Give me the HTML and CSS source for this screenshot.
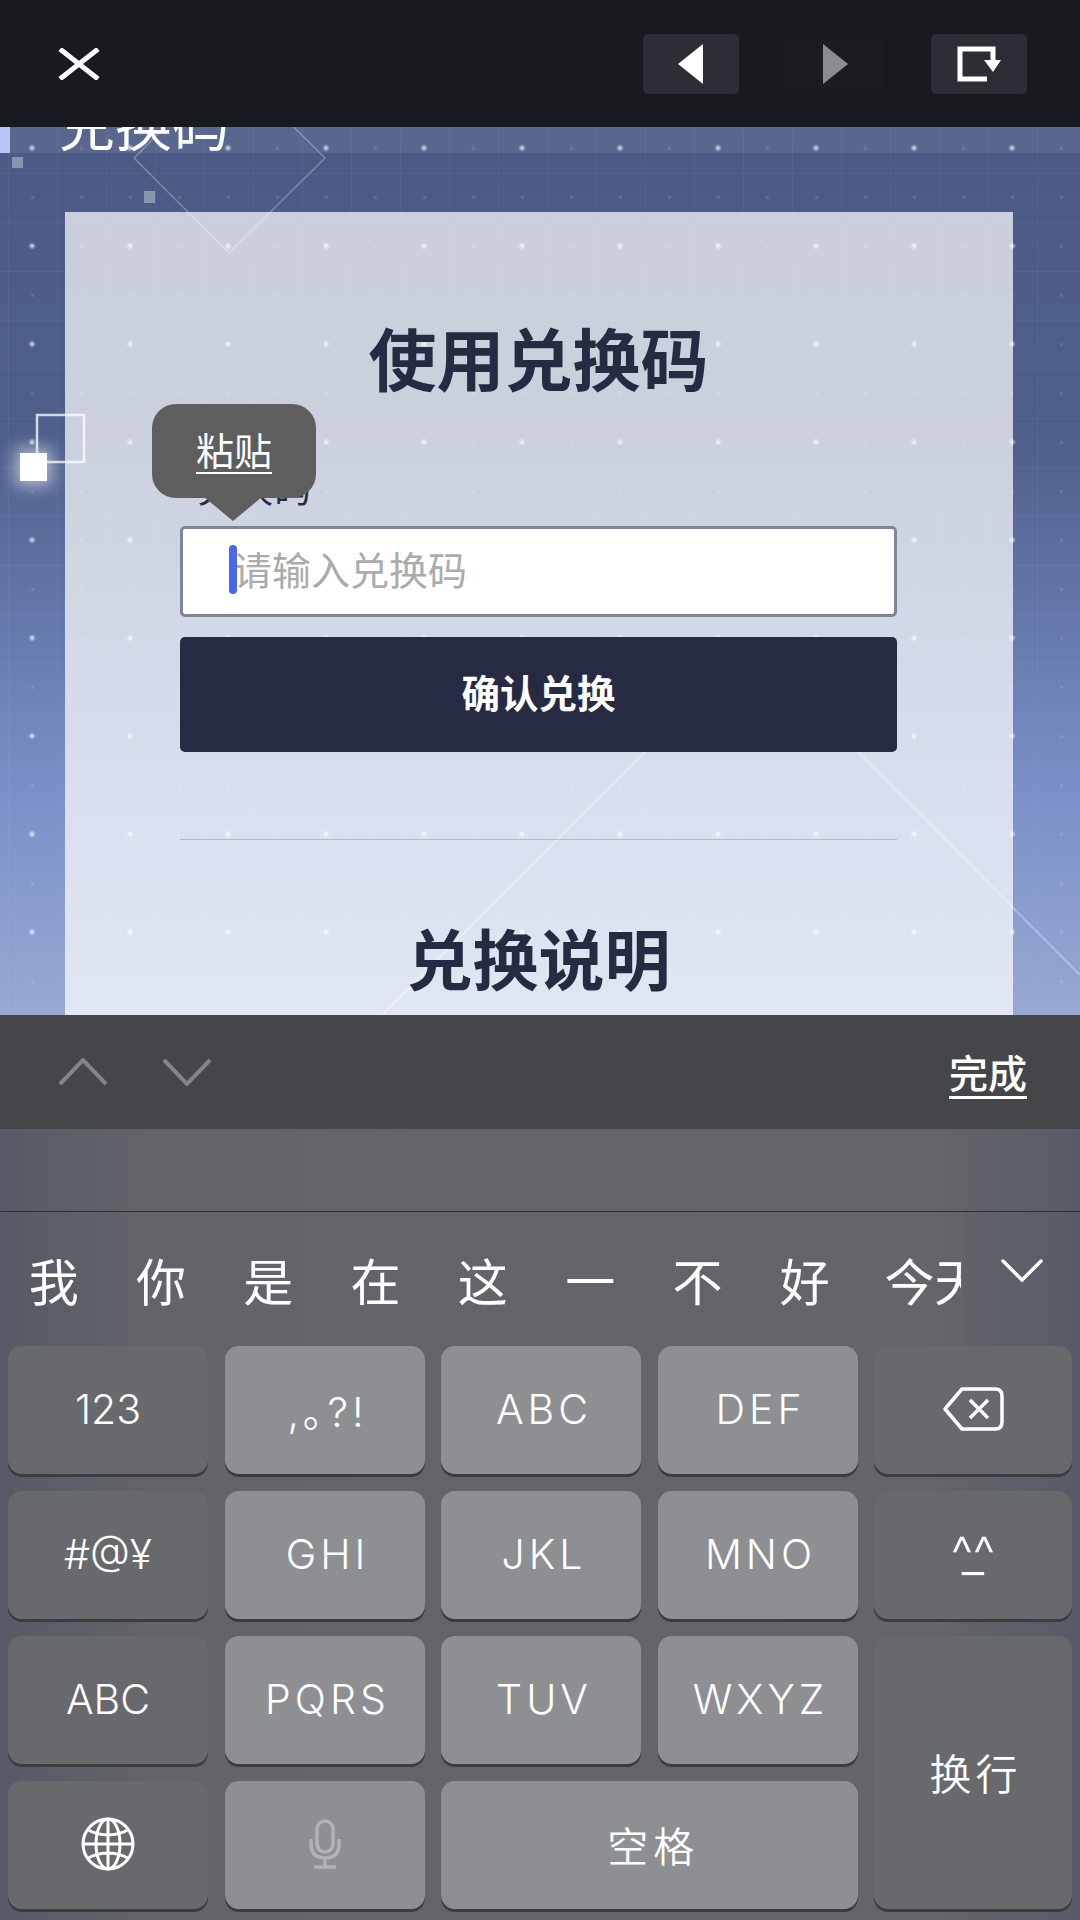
FILE: index.html
```html
<!DOCTYPE html>
<html lang="zh-CN">
<head>
    <meta charset="UTF-8">
    <meta name="viewport" content="width=device-width, initial-scale=1.0">
    <title>兑换码</title>
    <link rel="stylesheet" href="styles.css">
</head>
<body>
    <header class="topbar">
        <svg class="close-icon" width="42" height="32" viewBox="0 0 42 32"><path d="M2 1 40 31M40 1 2 31" stroke="#fff" stroke-width="5" fill="none"/></svg>
        <div class="nav-buttons">
            <div class="nav-btn">
                <svg width="26" height="40" viewBox="0 0 26 40"><path d="M25 0V40L0 20Z" fill="#fff"/></svg>
            </div>
            <div class="nav-btn nav-btn-off">
                <svg width="26" height="40" viewBox="0 0 26 40"><path d="M1 0V40L26 20Z" fill="#8c8c8e"/></svg>
            </div>
            <div class="nav-btn">
                <svg width="44" height="36" viewBox="0 0 44 36"><path d="M30 33H3V3H36V15" stroke="#fff" stroke-width="5" fill="none"/><path d="M27 14H44L36 26Z" fill="#fff"/></svg>
            </div>
        </div>
    </header>

    <main class="page">
        <!-- decoration behind the content -->
        <svg class="deco" width="1080" height="888" viewBox="0 0 1080 888">
            <path d="M229 -64 325 31 229 126 134 31Z" fill="none" stroke="rgba(255,255,255,.28)" stroke-width="1.5"/>
            <path d="M648 622 382 888M855 622 1080 848" stroke="rgba(255,255,255,.3)" stroke-width="2" fill="none"/>
            <rect x="0" y="0" width="10" height="26" fill="#b4c0f2"/>
            <rect x="12" y="30" width="11" height="11" fill="rgba(255,255,255,.35)"/>
            <rect x="144" y="64" width="11" height="12" fill="rgba(255,255,255,.35)"/>
            <rect x="37" y="288" width="47" height="47" fill="none" stroke="rgba(255,255,255,.75)" stroke-width="2.5"/>
        </svg>
        <div class="glow-square"></div>

        <div class="strip"><h2 class="strip-title">兑换码</h2></div>

        <section class="card">
            <h1 class="card-title">使用兑换码</h1>
            <label class="field-label" for="code">兑换码</label>
            <div class="field">
                <input class="field-input" id="code" type="text" placeholder="请输入兑换码">
                <span class="caret"></span>
                <div class="paste-tip"><span class="paste-text">粘贴</span></div>
            </div>
            <button class="confirm">确认兑换</button>
            <hr class="divider">
            <h1 class="card-title card-title-second">兑换说明</h1>
        </section>
    </main>

    <div class="accessory">
        <div class="arrows">
            <svg width="50" height="28" viewBox="0 0 50 28"><path d="M2 26 25 2 48 26" stroke="#838488" stroke-width="4" fill="none"/></svg>
            <svg width="50" height="28" viewBox="0 0 50 28"><path d="M2 2 25 26 48 2" stroke="#838488" stroke-width="4" fill="none"/></svg>
        </div>
        <span class="done">完成</span>
    </div>

    <section class="keyboard">
        <div class="compose"></div>
        <div class="candidates">
            <div class="candidate-list">
                <span class="candidate">我</span>
                <span class="candidate">你</span>
                <span class="candidate">是</span>
                <span class="candidate">在</span>
                <span class="candidate">这</span>
                <span class="candidate">一</span>
                <span class="candidate">不</span>
                <span class="candidate">好</span>
                <span class="candidate">今天</span>
            </div>
            <div class="candidate-more">
                <svg width="42" height="24" viewBox="0 0 42 24"><path d="M2 2 21 21 40 2" stroke="#fff" stroke-width="3.5" fill="none" stroke-linecap="round"/></svg>
            </div>
        </div>
        <div class="keys">
            <div class="key key-dark">123</div>
            <div class="key key-spaced">,｡?!</div>
            <div class="key key-spaced">ABC</div>
            <div class="key key-spaced">DEF</div>
            <div class="key key-dark">
                <svg width="62" height="44" viewBox="0 0 62 44"><path d="M20 2H53Q60 2 60 9V35Q60 42 53 42H20L3 22Z" fill="none" stroke="#fff" stroke-width="3.5" stroke-linejoin="round"/><path d="M28 13 46 31M46 13 28 31" stroke="#fff" stroke-width="3.5" fill="none"/></svg>
            </div>

            <div class="key key-dark">#@¥</div>
            <div class="key key-spaced">GHI</div>
            <div class="key key-spaced">JKL</div>
            <div class="key key-spaced">MNO</div>
            <div class="key key-dark"><span class="face">^_^</span></div>

            <div class="key key-dark">ABC</div>
            <div class="key key-spaced">PQRS</div>
            <div class="key key-spaced">TUV</div>
            <div class="key key-spaced">WXYZ</div>
            <div class="key key-dark key-return">换行</div>

            <div class="key key-dark">
                <svg width="54" height="54" viewBox="0 0 54 54" fill="none" stroke="#fff" stroke-width="3">
                    <circle cx="27" cy="27" r="25"/>
                    <ellipse cx="27" cy="27" rx="12" ry="25"/>
                    <path d="M27 2V52M2 27H52M7 13Q27 23 47 13M7 41Q27 31 47 41"/>
                </svg>
            </div>
            <div class="key">
                <svg width="32" height="50" viewBox="0 0 32 50" fill="none" stroke="#b1b2b5" stroke-width="3.5">
                    <rect x="8" y="2" width="16" height="31" rx="8"/>
                    <path d="M2 20V25Q2 39 16 39Q30 39 30 25V20M16 39V47M5 48H27"/>
                </svg>
            </div>
            <div class="key key-space">空格</div>
        </div>
    </section>
</body>
</html>
```

FILE: styles.css
```css
* {
    box-sizing: border-box;
}
body {
    margin: 0;
    width: 1080px;
    height: 1920px;
    overflow: hidden;
    font-family: "Noto Sans CJK SC", "Noto Sans", sans-serif;
    background: #5c5d62;
    display: flex;
    flex-direction: column;
}

/* top bar */
.topbar {
    height: 127px;
    flex: none;
    background: #191a20;
    display: flex;
    justify-content: space-between;
    align-items: center;
    padding: 0 53px 0 58px;
    position: relative;
    z-index: 2;
}
.nav-buttons {
    display: flex;
    gap: 48px;
}
.nav-btn {
    width: 96px;
    height: 60px;
    background: #2c2d35;
    border-radius: 5px;
    display: flex;
    align-items: center;
    justify-content: center;
}
.nav-btn-off {
    background: #1b1c22;
}

/* page */
.page {
    height: 888px;
    flex: none;
    position: relative;
    overflow: hidden;
    background-color: #4a5a86;
    background-image:
        radial-gradient(circle, rgba(255,255,255,.8) 0, rgba(255,255,255,.35) 2px, transparent 4px),
        radial-gradient(circle, rgba(255,255,255,.16) 0, transparent 2.5px),
        linear-gradient(90deg, rgba(255,255,255,.045) 1px, transparent 1px),
        linear-gradient(rgba(255,255,255,.04) 1px, transparent 1px),
        linear-gradient(#4b5a85 0, #4f5f8c 35%, #7a90c8 75%, #98a8d2 100%);
    background-size: 98px 98px, 49px 49px, 49px 49px, 49px 49px, 100% 100%;
    background-position: -17px -28px, 8px -3px, 8px -3px, 8px -3px, 0 0;
}
.deco {
    position: absolute;
    left: 0;
    top: 0;
}
.glow-square {
    position: absolute;
    left: 20px;
    top: 326px;
    width: 27px;
    height: 28px;
    background: #fff;
    box-shadow: 0 0 16px 5px rgba(255, 255, 255, .55);
    z-index: 1;
}
.strip {
    height: 26px;
    background: rgba(255, 255, 255, .08);
    position: relative;
}
.strip-title {
    margin: 0;
    position: absolute;
    left: 58px;
    bottom: 4px;
    font-size: 57px;
    line-height: 56px;
    font-weight: 400;
    color: #fff;
}

/* card */
.card {
    margin: 59px 67px 0 65px;
    height: 803px;
    padding: 105px 116px 0 115px;
    background: rgba(255, 255, 255, .71);
    position: relative;
}
.card-title {
    margin: 0;
    text-align: center;
    font-size: 68px;
    line-height: 80px;
    font-weight: 700;
    color: #262b43;
}
.card-title-second {
    margin-top: 76px;
    font-size: 66px;
}
.field-label {
    display: block;
    margin: 64px 0 0 17px;
    font-size: 38px;
    line-height: 50px;
    color: #262b43;
}
.field {
    position: relative;
    margin-top: 15px;
}
.field-input {
    display: block;
    width: 100%;
    height: 91px;
    border: 3px solid #7f869c;
    border-radius: 5px;
    background: #fff;
    padding: 0 0 8px 50px;
    font-family: inherit;
    font-size: 39px;
    outline: none;
}
.field-input::placeholder {
    color: #ababab;
    opacity: 1;
}
.caret {
    position: absolute;
    left: 49px;
    top: 19px;
    width: 8px;
    height: 49px;
    border-radius: 4px;
    background: #4a68e8;
}
.paste-tip {
    position: absolute;
    left: -28px;
    top: -122px;
    width: 164px;
    height: 94px;
    border-radius: 24px;
    background: #5e5e5e;
    display: flex;
    align-items: center;
    justify-content: center;
}
.paste-tip::after {
    content: "";
    position: absolute;
    left: 52px;
    top: 93px;
    border: 29px solid transparent;
    border-top: 24px solid #5e5e5e;
    border-bottom: 0;
}
.paste-text {
    font-size: 38px;
    line-height: 46px;
    color: #fff;
    border-bottom: 2px solid #fff;
    margin-bottom: 2px;
}
.confirm {
    display: block;
    width: 100%;
    height: 115px;
    margin-top: 20px;
    padding: 0 0 8px;
    border: none;
    border-radius: 5px;
    background: #262b43;
    color: #fff;
    font-family: inherit;
    font-size: 38.5px;
    font-weight: 700;
}
.divider {
    margin: 87px 0 0;
    border: none;
    height: 1px;
    background: #b3b9c9;
}

/* keyboard accessory */
.accessory {
    height: 114px;
    flex: none;
    background: #45464a;
    display: flex;
    justify-content: space-between;
    align-items: center;
    padding: 0 53px 0 58px;
}
.arrows {
    display: flex;
    gap: 54px;
}
.done {
    font-size: 39px;
    line-height: 50px;
    color: #fff;
    font-weight: 500;
    border-bottom: 3px solid #fff;
}

/* keyboard */
.keyboard {
    flex: 1;
    background: linear-gradient(90deg, #565a66, #636469 14%, #646569 86%, #575b67);
}
.compose {
    height: 83px;
    border-bottom: 1px solid #2e2f33;
}
.candidates {
    height: 134px;
    display: flex;
}
.candidate-list {
    width: 962px;
    flex: none;
    overflow: hidden;
    display: flex;
    align-items: center;
    border-right: 1px solid #6b6c71;
    white-space: nowrap;
}
.candidate {
    flex: none;
    width: 107.3px;
    text-align: center;
    font-size: 50px;
    font-weight: 400;
    color: #fff;
}
.candidate:last-child {
    width: 110px;
    margin-left: 26px;
    text-align: left;
}
.candidate-more {
    padding: 47px 0 0 39px;
}
.keys {
    display: grid;
    grid-template-columns: repeat(4, 200px) 198px;
    grid-template-rows: repeat(4, 128px);
    column-gap: 16.5px;
    row-gap: 17px;
    padding-left: 8px;
}
.key {
    background: #8e8f92;
    border-radius: 14px;
    box-shadow: 0 3px 0 #3b3c40;
    display: flex;
    align-items: center;
    justify-content: center;
    color: #fff;
    font-family: Inter, "Noto Sans CJK SC", sans-serif;
    font-weight: 350;
    font-size: 41px;
    padding-bottom: 2px;
}
.key-dark {
    background: #68696d;
}
.key-spaced {
    letter-spacing: 4px;
    padding-left: 6px;
}
.key-return {
    grid-column: 5;
    grid-row: 3 / span 2;
    font-size: 42px;
    letter-spacing: 4px;
    padding-left: 5px;
}
.key-space {
    grid-column: 3 / span 2;
    font-size: 41px;
    letter-spacing: 5px;
    padding-left: 8px;
}
.face {
    font-size: 50px;
    letter-spacing: -8px;
    padding-right: 8px;
}
```
